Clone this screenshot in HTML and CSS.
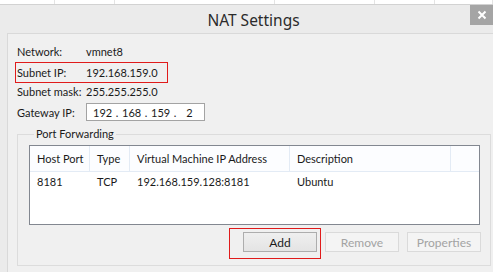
FILE: index.html
```html
<!DOCTYPE html>
<html lang="en">
<head>
  <meta charset="UTF-8" />
  <title>NAT Settings</title>
  <link rel="stylesheet" href="styles.css">
</head>
<body>
  <div class="desk">
    <span></span><span></span><span></span><span></span><span></span><span></span>
  </div>

  <div class="window">
    <div class="titlebar">
      <span></span>
      <h1 class="title">NAT Settings</h1>
      <button class="close" aria-label="Close">
        <svg width="10" height="10" viewBox="0 0 10 10">
          <path d="M1.5 1.5 L8.5 8.5 M8.5 1.5 L1.5 8.5" stroke="#fff" stroke-width="2" />
        </svg>
      </button>
    </div>

    <div class="content">
      <div class="field">
        <span class="label">Network:</span>
        <span class="value">vmnet8</span>
      </div>
      <div class="field mark">
        <span class="label">Subnet IP:</span>
        <span class="value">192.168.159.0</span>
      </div>
      <div class="field">
        <span class="label">Subnet mask:</span>
        <span class="value">255.255.255.0</span>
      </div>
      <div class="field gateway">
        <span class="label">Gateway IP:</span>
        <div class="ipbox">
          <span class="oct">192</span><span class="dot">.</span>
          <span class="oct">168</span><span class="dot">.</span>
          <span class="oct">159</span><span class="dot">.</span>
          <span class="oct">2</span>
        </div>
      </div>

      <fieldset class="group">
        <legend>Port Forwarding</legend>
        <div class="list">
          <div class="row head">
            <span class="c1">Host Port</span>
            <span class="c2">Type</span>
            <span class="c3">Virtual Machine IP Address</span>
            <span class="c4">Description</span>
            <span class="c5"></span>
          </div>
          <div class="row">
            <span class="c1">8181</span>
            <span class="c2">TCP</span>
            <span class="c3">192.168.159.128:8181</span>
            <span class="c4">Ubuntu</span>
            <span class="c5"></span>
          </div>
        </div>
        <div class="actions">
          <div class="mark-btn">
            <button class="btn">Add</button>
          </div>
          <button class="btn" disabled>Remove</button>
          <button class="btn" disabled>Properties</button>
        </div>
      </fieldset>
    </div>
  </div>
</body>
</html>
```

FILE: styles.css
```css
:root {
  --frame: #ebebeb;
  --face: #f0f0f0;
  --text: #1a1a1a;
  --line: #d9d9d9;
  --grid: #e3ebf5;
  --mark: #e01b1b;
}

body {
  margin: 0;
  background: #fff;
  font-family: Lato, 'Noto Sans', sans-serif;
  font-size: 11px;
  color: var(--text);
  width: 493px;
  height: 272px;
  overflow: hidden;
  white-space: nowrap;
}

.desk {
  display: grid;
  grid-template-columns: 55px 60px 160px 100px 60px 58px;
  height: 4px;
  border-bottom: 1px solid #d2d2d2;
}

.desk span {
  border-right: 1px solid #e4e4e4;
}

.window {
  background: var(--frame);
  padding-left: 7px;
  height: 267px;
}

.titlebar {
  display: grid;
  grid-template-columns: 1fr auto 1fr;
  height: 28px;
}

.title {
  margin: 0;
  padding: 1px 0 0 7px;
  font-family: 'Noto Sans', sans-serif;
  font-size: 15.5px;
  font-weight: normal;
  color: #2b2b2b;
  line-height: 28px;
}

.close {
  justify-self: end;
  align-self: start;
  width: 23px;
  height: 20px;
  border: none;
  padding: 0;
  background: #a5a5a5;
  display: flex;
  align-items: center;
  justify-content: center;
}

.content {
  background: var(--face);
  border-top: 1px solid var(--line);
  border-left: 1px solid var(--line);
  padding: 8px 0 0 8px;
  height: 240px;
}

.field {
  display: flex;
  align-items: center;
  height: 19px;
  padding-left: 1px;
}

.field.mark {
  width: 150px;
  border: 1px solid var(--mark);
  margin: 1px 0 -1px -1px;
}

.label {
  width: 69px;
  flex: none;
}

.gateway {
  margin-top: 2px;
  height: 18px;
}

.ipbox {
  width: 111px;
  height: 16px;
  border: 1px solid #a3a3a3;
  background: #fff;
  display: flex;
  align-items: center;
  padding-left: 6px;
  line-height: 1;
}

.oct {
  width: 19px;
  text-align: center;
}

.dot {
  width: 10px;
  text-align: center;
}

.group {
  margin: 6px 2px 0 1px;
  padding: 4px 10px 6px 11px;
  border: 1px solid #dcdcdc;
  border-radius: 0;
  min-width: 0;
}

.group legend {
  padding: 0 2px;
  margin-left: 5px;
  line-height: 14px;
}

.list {
  border: 1px solid #828790;
  background: #fff;
  height: 78px;
}

.row {
  display: flex;
  height: 19px;
  align-items: center;
}

.row.head {
  height: 25px;
  background: #fcfdff;
  border-bottom: 1px solid var(--grid);
}

.row span {
  flex: none;
  padding-left: 7px;
  box-sizing: border-box;
  height: 100%;
  display: flex;
  align-items: center;
}

.row.head span {
  border-right: 1px solid var(--grid);
}

.c1 { width: 60px; }
.c2 { width: 40px; }
.c3 { width: 160px; }
.c4 { width: 161px; }
.c5 { width: 27px; }

.row.head .c5 {
  border-right: none;
}

.actions {
  display: flex;
  justify-content: flex-end;
  align-items: flex-start;
  gap: 8px;
  margin-top: 3px;
  margin-right: -1px;
}

.actions > .btn {
  margin-top: 4px;
}

.mark-btn {
  border: 1px solid var(--mark);
  padding: 3px 3px 6px 13px;
  margin-right: -4px;
}

.btn {
  width: 74px;
  height: 20px;
  padding: 0;
  font-family: inherit;
  font-size: 12px;
  color: var(--text);
  background: linear-gradient(#efefef, #e4e4e4);
  border: 1px solid #adadad;
  display: block;
}

.btn:disabled {
  background: #f4f4f4;
  border-color: #dadada;
  color: #a3a3a3;
}
```
